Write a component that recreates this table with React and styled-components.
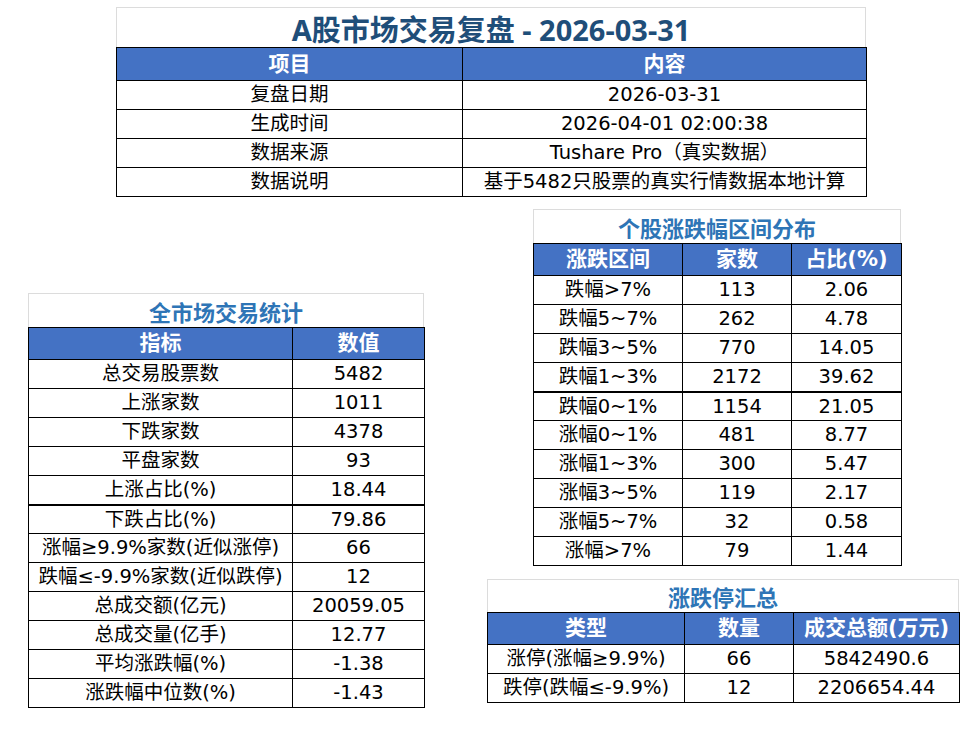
import React from "react";
import styled, { createGlobalStyle } from "styled-components";

const Global = createGlobalStyle`
  html, body { margin: 0; padding: 0; background: #ffffff; }
  body { font-family: "DejaVu Sans", "Noto Sans CJK SC", sans-serif; color: #000; }
  * { box-sizing: border-box; }
`;

const Page = styled.div`
  width: 978px;
  height: 737px;
  background: #fff;
  overflow: hidden;
`;

const Block = styled.section`
  width: ${(p) => p.$w}px;
  margin-left: ${(p) => p.$ml || 0}px;
  margin-top: ${(p) => p.$mt || 0}px;
`;

const Title = styled.div`
  height: ${(p) => p.$h}px;
  border: 1px solid #dcdcdc;
  border-bottom: none;
  display: flex;
  align-items: center;
  justify-content: center;
  font-family: "Noto Sans", "Noto Sans CJK SC", sans-serif;
  font-weight: 700;
  font-size: ${(p) => p.$fs}px;
  color: ${(p) => p.$c};
  white-space: nowrap;
`;

const Table = styled.table`
  width: 100%;
  border-collapse: collapse;
  table-layout: fixed;
`;

const Th = styled.th`
  background: #4472c4;
  color: #ffffff;
  font-family: "DejaVu Sans", "Noto Sans CJK SC", sans-serif;
  font-weight: 700;
  font-size: 21px;
  height: ${(p) => p.$h || 32}px;
  padding: 0;
  border: 1px solid #000;
  text-align: center;
  white-space: nowrap;
  line-height: 1;
`;

const Td = styled.td`
  font-family: "DejaVu Sans", "Noto Sans CJK SC", sans-serif;
  font-size: 19.5px;
  height: 29px;
  padding: 0;
  border: 1px solid #000;
  border-bottom-width: ${(p) => (p.$thick ? 2 : 1)}px;
  text-align: center;
  white-space: nowrap;
  line-height: 1;
`;

const Row2 = styled.div`
  display: flex;
  align-items: flex-start;
`;

const RightCol = styled.div`
  display: flex;
  flex-direction: column;
  margin-left: 63px;
`;

function DataTable({ w, ml, mt, title, titleH, titleFs, titleColor, cols, head, headH, rows, thickAfter }) {
  return (
    <Block $w={w} $ml={ml} $mt={mt}>
      <Title $h={titleH} $fs={titleFs} $c={titleColor}>{title}</Title>
      <Table>
        <colgroup>
          {cols.map((c, i) => (
            <col key={i} style={{ width: c }} />
          ))}
        </colgroup>
        <thead>
          <tr>
            {head.map((h, i) => (
              <Th key={i} $h={headH}>{h}</Th>
            ))}
          </tr>
        </thead>
        <tbody>
          {rows.map((r, i) => (
            <tr key={i}>
              {r.map((c, j) => (
                <Td key={j} $thick={thickAfter === i}>{c}</Td>
              ))}
            </tr>
          ))}
        </tbody>
      </Table>
    </Block>
  );
}

const BLUE_DARK = "#1f4e79";
const BLUE = "#2e75b6";

export default function App() {
  return (
    <Page>
      <Global />
      <DataTable
        w={750}
        ml={116}
        mt={7}
        title="A股市场交易复盘 - 2026-03-31"
        titleH={40}
        titleFs={29}
        titleColor={BLUE_DARK}
        cols={[346, 404]}
        head={["项目", "内容"]}
        headH={33}
        rows={[
          ["复盘日期", "2026-03-31"],
          ["生成时间", "2026-04-01 02:00:38"],
          ["数据来源", "Tushare Pro（真实数据）"],
          ["数据说明", "基于5482只股票的真实行情数据本地计算"],
        ]}
      />
      <Row2>
        <DataTable
          w={396}
          ml={28}
          mt={96}
          title="全市场交易统计"
          titleH={34}
          titleFs={22}
          titleColor={BLUE}
          cols={[264, 132]}
          head={["指标", "数值"]}
          rows={[
            ["总交易股票数", "5482"],
            ["上涨家数", "1011"],
            ["下跌家数", "4378"],
            ["平盘家数", "93"],
            ["上涨占比(%)", "18.44"],
            ["下跌占比(%)", "79.86"],
            ["涨幅≥9.9%家数(近似涨停)", "66"],
            ["跌幅≤-9.9%家数(近似跌停)", "12"],
            ["总成交额(亿元)", "20059.05"],
            ["总成交量(亿手)", "12.77"],
            ["平均涨跌幅(%)", "-1.38"],
            ["涨跌幅中位数(%)", "-1.43"],
          ]}
          thickAfter={4}
        />
        <RightCol>
          <DataTable
            w={368}
            ml={46}
            mt={12}
            title="个股涨跌幅区间分布"
            titleH={34}
            titleFs={22}
            titleColor={BLUE}
            cols={[149, 109, 110]}
            head={["涨跌区间", "家数", "占比(%)"]}
            rows={[
              ["跌幅>7%", "113", "2.06"],
              ["跌幅5~7%", "262", "4.78"],
              ["跌幅3~5%", "770", "14.05"],
              ["跌幅1~3%", "2172", "39.62"],
              ["跌幅0~1%", "1154", "21.05"],
              ["涨幅0~1%", "481", "8.77"],
              ["涨幅1~3%", "300", "5.47"],
              ["涨幅3~5%", "119", "2.17"],
              ["涨幅5~7%", "32", "0.58"],
              ["涨幅>7%", "79", "1.44"],
            ]}
            thickAfter={3}
          />
          <DataTable
            w={472}
            ml={0}
            mt={13}
            title="涨跌停汇总"
            titleH={33}
            titleFs={22}
            titleColor={BLUE}
            cols={[197, 109, 166]}
            head={["类型", "数量", "成交总额(万元)"]}
            rows={[
              ["涨停(涨幅≥9.9%)", "66", "5842490.6"],
              ["跌停(跌幅≤-9.9%)", "12", "2206654.44"],
            ]}
          />
        </RightCol>
      </Row2>
    </Page>
  );
}
